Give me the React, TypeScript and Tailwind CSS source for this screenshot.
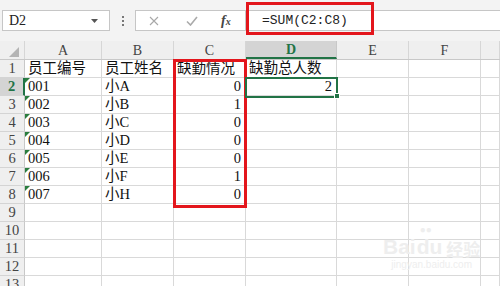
import { memo } from 'react'

const cols = [
	'w-[25px]',
	'w-[77px]',
	'w-[72px]',
	'w-[72px]',
	'w-[91px]',
	'w-[72px]',
	'w-[72px]',
	'w-[19px]',
]
const letters = ['', 'A', 'B', 'C', 'D', 'E', 'F', '']

const data: string[][] = [
	['员工编号', '员工姓名', '缺勤情况', '缺勤总人数'],
	['001', '小A', '0', '2'],
	['002', '小B', '1', ''],
	['003', '小C', '0', ''],
	['004', '小D', '0', ''],
	['005', '小E', '0', ''],
	['006', '小F', '1', ''],
	['007', '小H', '0', ''],
	[],
	[],
	[],
	[],
	[],
]

const Toolbar = memo(function Toolbar() {
	return (
		<div className="relative flex h-[41px] items-start bg-[#f3f3f3] pt-[10px]">
			<div className="ml-[2px] flex h-[21px] w-[108px] items-center justify-between border border-[#c6c6c6] bg-white pl-[6px] pr-[11px] text-[14px] text-[#222]">
				<span className="font-['Liberation_Serif']">D2</span>
				<svg width="7" height="4" viewBox="0 0 7 4">
					<path d="M0 0h7L3.5 4z" fill="#555" />
				</svg>
			</div>
			<div className="flex h-[21px] w-[25px] flex-col items-center justify-center gap-[2px]">
				<span className="h-[2px] w-[2px] bg-[#777]" />
				<span className="h-[2px] w-[2px] bg-[#777]" />
				<span className="h-[2px] w-[2px] bg-[#777]" />
			</div>
			<div className="flex h-[21px] w-[111px] items-center border border-[#c6c6c6] bg-white">
				<svg className="ml-[13px]" width="10" height="10" viewBox="0 0 10 10">
					<path d="M1 1l8 8M9 1l-8 8" stroke="#a8a8a8" strokeWidth="1.1" />
				</svg>
				<svg className="ml-[27px]" width="12" height="10" viewBox="0 0 12 10">
					<path d="M1 5.5l3.5 3.5L11 1" stroke="#aaa" strokeWidth="1.6" fill="none" />
				</svg>
				<span className="ml-[23px] font-['Liberation_Serif'] text-[14px] font-bold italic leading-none text-[#444]">
					f<span className="text-[10px]">x</span>
				</span>
			</div>
			<div className="flex h-[21px] flex-1 items-center border-y border-[#c6c6c6] bg-white pl-[16px] font-['Liberation_Mono'] text-[13px] text-[#222]">
				=SUM(C2:C8)
			</div>
			<div className="absolute left-[246px] top-[2px] h-[33px] w-[128px] border-[3px] border-[#e3161c]" />
		</div>
	)
})

function HeaderRow() {
	return (
		<div className="flex h-[19px] border-b border-[#c8c8c8] bg-[#efefef] font-['Liberation_Serif'] text-[14px] text-[#444]">
			{cols.map((w, i) => (
				<div
					key={i}
					className={`${w} flex shrink-0 items-center justify-center border-r ${
						i === 4
							? 'border-[#c8c8c8] border-b-2 border-b-[#217346] bg-[#d4d4d4] font-bold text-[#217346]'
							: 'border-[#d6d6d6]'
					}`}
				>
					{i === 0 ? (
						<svg className="ml-[4px] mt-[3px]" width="10" height="10" viewBox="0 0 10 10">
							<path d="M10 0v10H0z" fill="#b4b4b4" />
						</svg>
					) : (
						letters[i]
					)}
				</div>
			))}
		</div>
	)
}

function Row({ n, cells }: { n: number; cells: string[] }) {
	const sel = n === 2
	return (
		<div className="flex h-[18px] text-[14.5px] text-[#111]">
			<div
				className={`w-[25px] shrink-0 border-b border-[#d4d4d4] font-['Liberation_Serif'] leading-[17px] text-center ${
					sel
						? 'border-r-2 border-r-[#217346] bg-[#d4d4d4] font-bold text-[#217346]'
						: 'border-r border-r-[#c8c8c8] bg-[#efefef] text-[#444]'
				}`}
			>
				{n}
			</div>
			{cols.slice(1).map((w, i) => {
				const v = cells[i] ?? ''
				const right = (i === 2 || i === 3) && n > 1
				return (
					<div
						key={i}
						className={`${w} relative shrink-0 overflow-visible whitespace-nowrap border-b border-r border-[#d9d9d9] leading-[17px] ${
							right ? 'pr-[4px] text-right' : 'pl-[3px]'
						}`}
					>
						{i === 0 && n > 1 && v && (
							<span className="absolute left-0 top-0 h-0 w-0 border-r-[5px] border-t-[5px] border-r-transparent border-t-[#2a7d3e]" />
						)}
						{v}
					</div>
				)
			})}
		</div>
	)
}

export default function App() {
	return (
		<div className="h-[286px] w-[500px] overflow-hidden bg-white font-['Liberation_Serif','Noto_Sans_CJK_SC',serif]">
			<Toolbar />
			<div className="relative">
				<HeaderRow />
				{data.map((cells, i) => (
					<Row key={i} n={i + 1} cells={cells} />
				))}
				<div className="absolute left-[173px] top-[18px] h-[149px] w-[74px] border-[3px] border-[#e3161c]" />
				<div className="absolute left-[245px] top-[36px] h-[21px] w-[93px] border-2 border-[#217346]" />
				<div className="absolute left-[334px] top-[52px] h-[6px] w-[6px] border border-white bg-[#217346]" />
				<div className="pointer-events-none absolute left-[383px] top-[195px] flex flex-col items-center text-[#eeeeee]">
					<div className="flex items-end font-['Liberation_Sans'] text-[21px] font-bold leading-none">
						<span>Bai</span>
						<span className="relative mx-[1px]">
							du
							<span className="absolute -top-[11px] left-[3px] text-[10px]">●●</span>
						</span>
						<span className="ml-[3px] font-['Noto_Sans_CJK_SC'] text-[17px]">经验</span>
					</div>
					<div className="mt-[3px] font-['Liberation_Sans'] text-[10px] leading-none">jingyan.baidu.com</div>
				</div>
			</div>
		</div>
	)
}
